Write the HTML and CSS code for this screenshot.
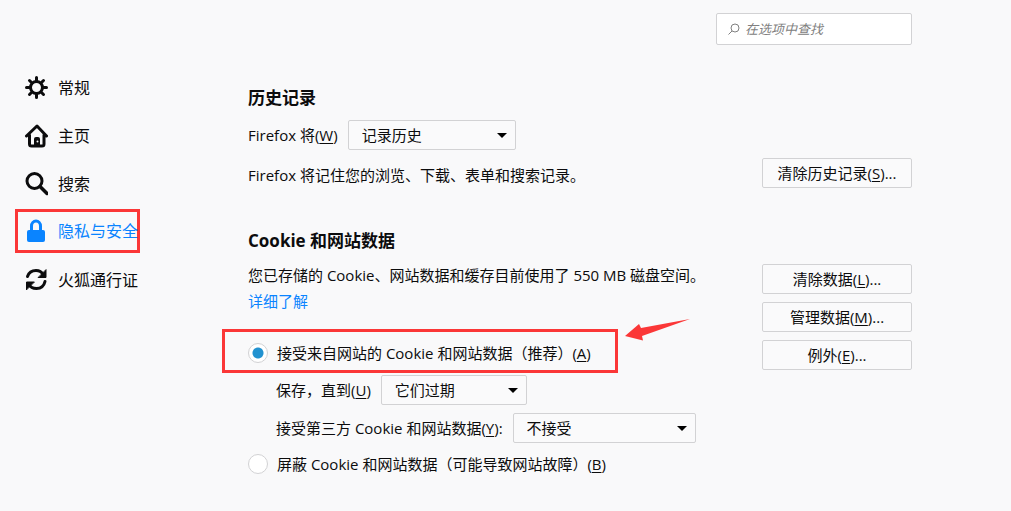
FILE: index.html
```html
<!DOCTYPE html>
<html lang="zh-CN">
<head>
    <meta charset="UTF-8">
    <meta name="viewport" content="width=device-width, initial-scale=1.0">
    <title>选项</title>
    <link rel="stylesheet" href="styles.css">
</head>
<body>
    <nav class="sidebar">
        <a class="category" href="#general">
            <svg class="icon" viewBox="0 0 24 24" fill="none" stroke="currentColor" stroke-width="3" stroke-linecap="round">
                <circle cx="12.500" cy="11.500" r="6"/>
                <path d="M12.500 1.500v3M12.500 18.500v3M2.500 11.500h3M19.500 11.500h3M5.500 4.500l2 2M17.500 16.500l2 2M5.500 18.500l2-2M17.500 6.500l2-2"/>
            </svg>
            <span>常规</span>
        </a>
        <a class="category" href="#home">
            <svg class="icon" viewBox="0 0 24 24" fill="none" stroke="currentColor" stroke-width="3" stroke-linecap="round" stroke-linejoin="round">
                <path d="M2.500 12L13 2L22.500 12M5.500 11v9q0 2 2 2h10.500q2 0 2-2v-9"/>
                <path d="M10 22v-7q0-2 2-2h2q2 0 2 2v7z" fill="currentColor" stroke="none"/>
                <circle cx="13.500" cy="17.500" r="1" fill="#f9f9fa" stroke="none"/>
            </svg>
            <span>主页</span>
        </a>
        <a class="category" href="#search">
            <svg class="icon" viewBox="0 0 24 24" fill="none" stroke="currentColor" stroke-width="3" stroke-linecap="round">
                <circle cx="10.500" cy="9" r="7.500"/>
                <path d="M16 14.500l7 7" stroke-width="3.500"/>
            </svg>
            <span>搜索</span>
        </a>
        <a class="category selected" href="#privacy">
            <svg class="icon" viewBox="0 0 24 24">
                <path d="M7.500 12V7a4.500 5 0 0 1 9 0v5" fill="none" stroke="currentColor" stroke-width="3"/>
                <rect x="3" y="11" width="18" height="12" rx="2" fill="currentColor"/>
            </svg>
            <span>隐私与安全</span>
        </a>
        <a class="category" href="#sync">
            <svg class="icon" viewBox="0 0 24 24" fill="none" stroke="currentColor" stroke-width="3" stroke-linecap="round">
                <path d="M3.500 8.500C5 4 8 2.500 12 2.500c3 0 5.500 1 7 4M21 13.500C20 18 16.500 20.500 12.500 20.500c-3 0-6-1-7.500-4"/>
                <path d="M22 2v7.500h-7.500zM2.500 21.500V14H10z" fill="currentColor" stroke-width="1" stroke-linejoin="round"/>
            </svg>
            <span>火狐通行证</span>
        </a>
    </nav>

    <main class="content">
        <div class="search-box">
            <svg class="search-icon" viewBox="0 0 12 12" fill="none" stroke="currentColor">
                <circle cx="7" cy="5" r="4"/>
                <path d="M4 8l-3.500 3.500"/>
            </svg>
            <input type="search" placeholder="在选项中查找" aria-label="在选项中查找">
        </div>

        <section>
            <h2>历史记录</h2>
            <div class="row">
                <label for="history-mode">Firefox 将(<u>W</u>)</label>
                <span class="dropdown history">
                    <select id="history-mode"><option>记录历史</option></select>
                </span>
            </div>
            <div class="history-info">
                <p>Firefox 将记住您的浏览、下载、表单和搜索记录。</p>
                <button type="button">清除历史记录(<u>S</u>)...</button>
            </div>
        </section>

        <section>
            <h2>Cookie 和网站数据</h2>
            <div class="columns">
                <div class="settings">
                    <p>您已存储的 Cookie、网站数据和缓存目前使用了 550 MB 磁盘空间。</p>
                    <p><a class="link" href="#more">详细了解</a></p>
                    <div class="radio-row marked">
                        <input type="radio" name="cookies" id="accept" checked>
                        <label for="accept">接受来自网站的 Cookie 和网站数据（推荐）(<u>A</u>)</label>
                        <svg class="arrow" viewBox="0 0 66 22">
                            <path d="M0 17L14 5L16 9L65 0L17 17L18 21.500z"/>
                        </svg>
                    </div>
                    <div class="row indent keep">
                        <label for="keep-until">保存，直到(<u>U</u>)</label>
                        <span class="dropdown until">
                            <select id="keep-until"><option>它们过期</option></select>
                        </span>
                    </div>
                    <div class="row indent">
                        <label for="third-party">接受第三方 Cookie 和网站数据(<u>Y</u>):</label>
                        <span class="dropdown third-party">
                            <select id="third-party"><option>不接受</option></select>
                        </span>
                    </div>
                    <div class="radio-row">
                        <input type="radio" name="cookies" id="block">
                        <label for="block">屏蔽 Cookie 和网站数据（可能导致网站故障）(<u>B</u>)</label>
                    </div>
                </div>
                <div class="buttons">
                    <button type="button">清除数据(<u>L</u>)...</button>
                    <button type="button">管理数据(<u>M</u>)...</button>
                    <button type="button">例外(<u>E</u>)...</button>
                </div>
            </div>
        </section>
    </main>
</body>
</html>
```

FILE: styles.css
```css
* {
    box-sizing: border-box;
}
body {
    margin: 0;
    display: flex;
    font-family: "Open Sans", "Noto Sans CJK SC", sans-serif;
    font-size: 15px;
    line-height: 26px;
    color: #0c0c0d;
    background-color: #f9f9fa;
}
h2 {
    margin: 40px 0 10px;
    font-size: 17px;
    line-height: 25px;
    font-weight: bold;
}
p {
    margin: 0;
}
u {
    text-underline-offset: 2px;
}

/* Sidebar */
.sidebar {
    flex: 0 0 248px;
    min-width: 0;
    padding: 64px 108px 0 15px;
}
.category {
    display: flex;
    align-items: center;
    gap: 10px;
    height: 48px;
    padding-left: 9px;
    font-size: 16px;
    color: inherit;
    text-decoration: none;
    white-space: nowrap;
}
.category.selected {
    height: 44px;
    margin: 1px 0 3px;
    padding-left: 6px;
    border: 3px solid #fb3737;
    color: #0a84ff;
}
.icon {
    flex: none;
    width: 24px;
    height: 24px;
}

/* Content */
.content {
    flex: 1;
    max-width: 664px;
    padding: 13px 0 30px;
}
.search-box {
    display: flex;
    align-items: center;
    gap: 5px;
    width: 196px;
    height: 32px;
    margin-left: auto;
    padding: 0 11px;
    border: 1px solid #d2d2d4;
    border-radius: 2px;
    background: #fff;
}
.search-icon {
    flex: none;
    width: 12px;
    height: 12px;
    color: #808080;
}
.search-box input {
    flex: 1;
    min-width: 0;
    padding: 0;
    border: 0;
    outline: 0;
    background: none;
    font: italic 13px "Open Sans", "Noto Sans CJK SC", sans-serif;
}
.search-box input::placeholder {
    color: #808080;
}
.row {
    display: flex;
    align-items: center;
    gap: 10px;
    margin-bottom: 8px;
}
.indent {
    margin-left: 28px;
}
.keep {
    margin-top: 2px;
}
.history-info {
    display: flex;
    justify-content: space-between;
    align-items: flex-end;
}
.columns {
    display: flex;
    justify-content: space-between;
    margin-top: -1px;
}
h2 + .columns {
    margin-top: -1px;
}
.buttons {
    display: flex;
    flex-direction: column;
    gap: 8px;
    padding-top: 2px;
}
button,
select {
    height: 30px;
    border: 1px solid #d2d2d4;
    border-radius: 2px;
    background: #fafafb;
    font: inherit;
    line-height: 26px;
    color: inherit;
}
button {
    width: 150px;
    padding: 0;
}

/* Drop-downs */
.dropdown {
    position: relative;
    display: flex;
}
.dropdown::after {
    content: "";
    position: absolute;
    top: 13px;
    right: 9px;
    border: 5px solid transparent;
    border-top-color: #000;
    border-bottom: 0;
    pointer-events: none;
}
.dropdown select {
    width: 100%;
    padding: 0 24px 0 13px;
    appearance: none;
}
.history {
    width: 168px;
}
.until {
    width: 146px;
}
.third-party {
    width: 183px;
}

/* Radio buttons */
.radio-row {
    display: flex;
    align-items: center;
    gap: 9px;
}
.radio-row input {
    appearance: none;
    flex: none;
    width: 20px;
    height: 20px;
    margin: 0;
    border: 1px solid #d2d2d4;
    border-radius: 50%;
    background: #fff;
}
.radio-row input:checked {
    background: radial-gradient(circle, #2292d0 5px, #fff 6px);
}
.marked {
    position: relative;
    width: fit-content;
    height: 44px;
    margin: 15px 0 0 -26px;
    padding: 4px 24px 0 23px;
    border: 3px solid #fb3737;
}
.arrow {
    position: absolute;
    top: -13px;
    left: 100%;
    width: 66px;
    height: 22px;
    margin-left: 10px;
    fill: #fb3737;
}
.link {
    color: #0a84ff;
    text-decoration: none;
}
```
